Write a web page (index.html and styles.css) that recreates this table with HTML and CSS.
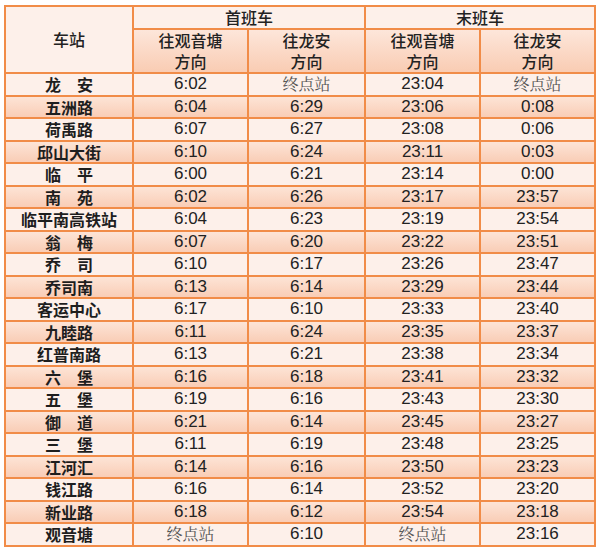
FILE: index.html
```html
<!DOCTYPE html>
<html lang="zh-CN">
<head>
<meta charset="utf-8">
<title>首末班车时刻表</title>
<link rel="stylesheet" href="styles.css">
</head>
<body>
<table class="timetable">
  <colgroup>
    <col class="c-station">
    <col class="c-time">
    <col class="c-time2">
    <col class="c-time">
    <col class="c-time">
  </colgroup>
  <thead>
    <tr class="h1">
      <th rowspan="2" class="hd-station">车站</th>
      <th colspan="2" class="hd-group">首班车</th>
      <th colspan="2" class="hd-group">末班车</th>
    </tr>
    <tr class="h2">
      <th class="hd-dir">往观音塘<br>方向</th>
      <th class="hd-dir">往龙安<br>方向</th>
      <th class="hd-dir">往观音塘<br>方向</th>
      <th class="hd-dir">往龙安<br>方向</th>
    </tr>
  </thead>
  <tbody>
    <tr class="lt"><td class="st">龙　安</td><td>6:02</td><td class="end">终点站</td><td>23:04</td><td class="end">终点站</td></tr>
    <tr class="dk"><td class="st">五洲路</td><td>6:04</td><td>6:29</td><td>23:06</td><td>0:08</td></tr>
    <tr class="lt"><td class="st">荷禹路</td><td>6:07</td><td>6:27</td><td>23:08</td><td>0:06</td></tr>
    <tr class="dk"><td class="st">邱山大街</td><td>6:10</td><td>6:24</td><td>23:11</td><td>0:03</td></tr>
    <tr class="lt"><td class="st">临　平</td><td>6:00</td><td>6:21</td><td>23:14</td><td>0:00</td></tr>
    <tr class="dk"><td class="st">南　苑</td><td>6:02</td><td>6:26</td><td>23:17</td><td>23:57</td></tr>
    <tr class="lt"><td class="st">临平南高铁站</td><td>6:04</td><td>6:23</td><td>23:19</td><td>23:54</td></tr>
    <tr class="dk"><td class="st">翁　梅</td><td>6:07</td><td>6:20</td><td>23:22</td><td>23:51</td></tr>
    <tr class="lt"><td class="st">乔　司</td><td>6:10</td><td>6:17</td><td>23:26</td><td>23:47</td></tr>
    <tr class="dk"><td class="st">乔司南</td><td>6:13</td><td>6:14</td><td>23:29</td><td>23:44</td></tr>
    <tr class="lt"><td class="st">客运中心</td><td>6:17</td><td>6:10</td><td>23:33</td><td>23:40</td></tr>
    <tr class="dk"><td class="st">九睦路</td><td>6:11</td><td>6:24</td><td>23:35</td><td>23:37</td></tr>
    <tr class="lt"><td class="st">红普南路</td><td>6:13</td><td>6:21</td><td>23:38</td><td>23:34</td></tr>
    <tr class="dk"><td class="st">六　堡</td><td>6:16</td><td>6:18</td><td>23:41</td><td>23:32</td></tr>
    <tr class="lt"><td class="st">五　堡</td><td>6:19</td><td>6:16</td><td>23:43</td><td>23:30</td></tr>
    <tr class="dk"><td class="st">御　道</td><td>6:21</td><td>6:14</td><td>23:45</td><td>23:27</td></tr>
    <tr class="lt"><td class="st">三　堡</td><td>6:11</td><td>6:19</td><td>23:48</td><td>23:25</td></tr>
    <tr class="dk"><td class="st">江河汇</td><td>6:14</td><td>6:16</td><td>23:50</td><td>23:23</td></tr>
    <tr class="lt"><td class="st">钱江路</td><td>6:16</td><td>6:14</td><td>23:52</td><td>23:20</td></tr>
    <tr class="dk"><td class="st">新业路</td><td>6:18</td><td>6:12</td><td>23:54</td><td>23:18</td></tr>
    <tr class="lt"><td class="st">观音塘</td><td class="end">终点站</td><td>6:10</td><td class="end">终点站</td><td>23:16</td></tr>
  </tbody>
</table>
</body>
</html>
```

FILE: styles.css
```css
html, body {
  margin: 0;
  padding: 0;
  background: #ffffff;
}

body {
  padding: 5px 0 0 4px;
}

.timetable {
  border-collapse: collapse;
  table-layout: fixed;
  width: 590px;
  font-family: "Liberation Sans", Arial, "Noto Sans CJK SC", sans-serif;
  color: #2b2b2b;
}

.c-station { width: 128px; }
.c-time { width: 115px; }
.c-time2 { width: 117px; }

.timetable th,
.timetable td {
  border: 2px solid #f18c48;
  padding: 0;
  text-align: center;
  vertical-align: middle;
  white-space: nowrap;
  overflow: hidden;
}

.timetable th {
  font-family: "Noto Sans CJK SC", sans-serif;
  font-weight: 500;
  font-size: 16px;
  line-height: 21px;
  color: #222222;
}

.h1 { height: 22px; }
.h2 { height: 44px; }

.hd-station,
.hd-group {
  background: #fdf0ea;
}

.hd-dir {
  background: linear-gradient(#fde6da, #f9ccb3);
}

.timetable tbody tr {
  height: 22.5px;
}

.timetable td {
  font-size: 17px;
  line-height: 18px;
  color: #222222;
}

.timetable td.st {
  font-family: "Noto Sans CJK SC", sans-serif;
  font-weight: 700;
  font-size: 16px;
  color: #1e1e1e;
}

.timetable td.end {
  font-family: "Noto Serif CJK SC", "Noto Sans CJK SC", serif;
  font-weight: 400;
  font-size: 16px;
  color: #555555;
}

.lt td {
  background: #fdf0ea;
}

.dk td {
  background: linear-gradient(#fde4d6, #f9cdb6);
}
```
